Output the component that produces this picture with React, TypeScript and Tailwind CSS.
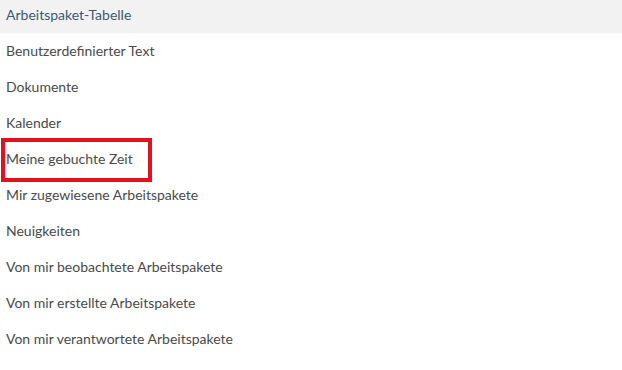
import React from "react";

const items = [
  "Benutzerdefinierter Text",
  "Dokumente",
  "Kalender",
  "Meine gebuchte Zeit",
  "Mir zugewiesene Arbeitspakete",
  "Neuigkeiten",
  "Von mir beobachtete Arbeitspakete",
  "Von mir erstellte Arbeitspakete",
  "Von mir verantwortete Arbeitspakete",
];

export default function App() {
  return (
    <div
      className="relative w-[622px] h-[370px] bg-white overflow-hidden"
      style={{ fontFamily: "Lato, 'Open Sans', sans-serif" }}
    >
      <div className="h-[33px] bg-[#f2f2f2] flex items-center pl-[6px] pb-[4px] text-[14px] text-[#3c5a74]">
        Arbeitspaket-Tabelle
      </div>
      <ul className="flex flex-col">
        {items.map((t) => (
          <li key={t} className="h-[36px] flex items-center pl-[6px] pb-[2px] text-[14px] text-[#4a4a4a]">
            {t}
          </li>
        ))}
      </ul>
      <div className="absolute left-[1px] top-[138px] w-[151px] h-[44px] border-4 border-[#e3101e]" />
    </div>
  );
}
